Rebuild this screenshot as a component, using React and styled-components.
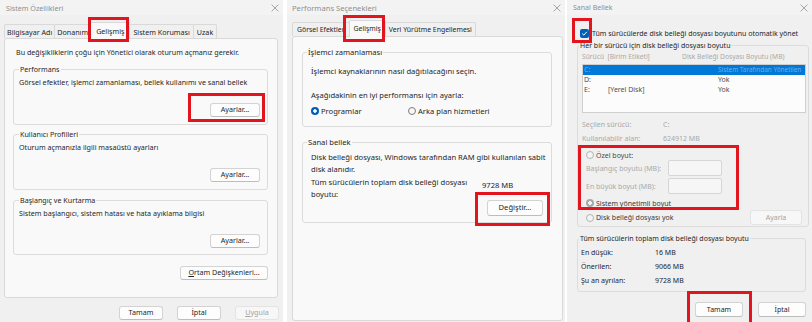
import React from "react";
import styled, { createGlobalStyle, css } from "styled-components";

const GlobalStyle = createGlobalStyle`
  html, body { margin: 0; padding: 0; background: #ffffff; }
  body { font-family: "Noto Sans", "Open Sans", "DejaVu Sans", sans-serif; color: #1f1f1f; }
  *, *::before, *::after { box-sizing: border-box; }
`;

const Screen = styled.div`
  display: flex;
  align-items: stretch;
  width: 812px;
  height: 322px;
  overflow: hidden;
  background: #ffffff;
`;

const Window = styled.section`
  position: relative;
  flex: 0 0 ${(p) => p.$w}px;
  margin-left: ${(p) => p.$ml || 0}px;
  display: flex;
  flex-direction: column;
  background: #f0f0f0;
  font-size: ${(p) => p.$fs}px;
  color: ${(p) => p.$color || "#1f1f1f"};
  overflow: hidden;
`;

const TitleBar = styled.header`
  flex: 0 0 15px;
  display: flex;
  align-items: center;
  justify-content: space-between;
  padding: 0 4px 0 ${(p) => p.$pl}px;
  background: #f3f3f3;
`;

const TitleText = styled.span`
  color: #8f8f8f;
  line-height: 10px;
  white-space: nowrap;
`;

const CloseSvg = styled.svg`
  display: block;
  flex: 0 0 auto;
`;

const CloseIcon = () => (
  <CloseSvg width="8" height="8" viewBox="0 0 8 8">
    <path d="M0.6 0.6 L7.4 7.4 M7.4 0.6 L0.6 7.4" stroke="#8f8f8f" strokeWidth="0.8" fill="none" />
  </CloseSvg>
);

const TabStrip = styled.div`
  flex: 0 0 ${(p) => p.$h}px;
  display: flex;
  align-items: flex-end;
  padding-left: ${(p) => p.$pl}px;
  font-size: ${(p) => (p.$fs ? `${p.$fs}px` : "inherit")};
`;

const Tab = styled.div`
  position: relative;
  z-index: ${(p) => (p.$active ? 2 : 1)};
  display: flex;
  align-items: center;
  height: ${(p) => (p.$active ? p.$h + 3 : p.$h)}px;
  margin-right: -1px;
  margin-bottom: ${(p) => (p.$active ? -1 : 0)}px;
  padding: ${(p) => (p.$active ? "0 " : "1px ")}${(p) => p.$px}px 0;
  background: ${(p) => (p.$active ? "#f9f9f9" : "#f0f0f0")};
  border: 1px solid #d9d9d9;
  border-bottom: none;
  border-radius: 2px 2px 0 0;
  line-height: 10px;
  white-space: nowrap;
`;

const TabPanel = styled.div`
  flex: ${(p) => (p.$h ? `0 0 ${p.$h}px` : "1 1 auto")};
  margin: ${(p) => p.$m};
  padding: ${(p) => p.$pad};
  background: #f9f9f9;
  border: 1px solid #d9d9d9;
  border-radius: 3px;
  display: flex;
  flex-direction: column;
`;

const Body = styled.div`
  flex: 1 1 auto;
  display: flex;
  flex-direction: column;
  padding: ${(p) => p.$pad};
`;

const Group = styled.fieldset`
  margin: ${(p) => p.$mt || 0}px ${(p) => p.$mr || 0}px 0 0;
  padding: 0 ${(p) => p.$pr}px ${(p) => p.$pb}px ${(p) => p.$pl}px;
  border: 1px solid #dcdcdc;
  border-radius: 3px;
  min-width: 0;
  display: flex;
  flex-direction: column;
`;

const Legend = styled.legend`
  padding: 0 1px;
  margin-left: ${(p) => p.$ml || 0}px;
  line-height: 11px;
  white-space: nowrap;
  color: ${(p) => p.$color || "inherit"};
`;

const Text = styled.p`
  margin: ${(p) => p.$mt || 0}px 0 0 ${(p) => p.$ml || 0}px;
  line-height: ${(p) => p.$lh || 11}px;
  color: ${(p) => p.$color || "inherit"};
  white-space: nowrap;
`;

const Btn = styled.button`
  flex: 0 0 auto;
  width: ${(p) => p.$w}px;
  height: ${(p) => p.$h || 14}px;
  margin-right: ${(p) => p.$mr || 0}px;
  padding: 0;
  font: inherit;
  line-height: 1;
  color: ${(p) => (p.disabled || p.$dim ? "#a3a3a3" : "#1f1f1f")};
  background: ${(p) => (p.disabled || p.$dim ? "#f7f7f7" : "#fdfdfd")};
  border: 1px solid ${(p) => (p.disabled || p.$dim ? "#e3e3e3" : "#d3d3d3")};
  border-bottom-color: ${(p) => (p.disabled || p.$dim ? "#e3e3e3" : "#bdbdbd")};
  border-radius: 3px;
  display: flex;
  align-items: center;
  justify-content: center;
  u { text-decoration-thickness: 0.6px; text-underline-offset: 1px; }
`;

const ButtonRow = styled.div`
  display: flex;
  justify-content: flex-end;
  align-items: center;
  gap: ${(p) => p.$gap || 0}px;
  margin-top: ${(p) => p.$mt || 0}px;
  padding-right: ${(p) => p.$pr || 0}px;
`;

const Footer = styled.footer`
  flex: 1 1 auto;
  display: flex;
  justify-content: flex-end;
  align-items: flex-start;
  gap: 14px;
  padding: 8px 4px 0 0;
`;

const Highlight = styled.div`
  position: absolute;
  left: ${(p) => p.$x}px;
  top: ${(p) => p.$y}px;
  width: ${(p) => p.$w}px;
  height: ${(p) => p.$h}px;
  border: 3px solid #e2141d;
  pointer-events: none;
  z-index: 10;
`;

const radioLook = {
  on: css`
    background: radial-gradient(circle, #ffffff 0 1.5px, #005fb8 1.9px);
  `,
  off: css`
    border: 1px solid #7d7d7d;
    background: #f7f7f7;
  `,
  offDim: css`
    border: 1px solid #b4b4b4;
    background: #f4f4f4;
  `,
  onDim: css`
    background: radial-gradient(circle, #f2f2f2 0 1.6px, #a9a9a9 2px);
  `,
};

const RadioDot = styled.span`
  flex: 0 0 auto;
  width: 8px;
  height: 8px;
  border-radius: 50%;
  ${(p) => radioLook[p.$look]}
`;

const RadioOption = styled.label`
  display: flex;
  align-items: center;
  gap: ${(p) => p.$gap || 2}px;
  width: ${(p) => (p.$w ? `${p.$w}px` : "auto")};
  height: ${(p) => p.$h || 12}px;
  color: ${(p) => p.$color || "inherit"};
  white-space: nowrap;
`;

const RadioRow = styled.div`
  display: flex;
  align-items: center;
  margin-top: ${(p) => p.$mt || 0}px;
`;

const CheckRow = styled.label`
  display: flex;
  align-items: center;
  gap: 3px;
  height: 12px;
  margin: 12px 0 0 3px;
  white-space: nowrap;
`;

const CheckBox = styled.span`
  flex: 0 0 auto;
  width: 9px;
  height: 9px;
  border-radius: 2px;
  background: #005fb8;
  display: flex;
  align-items: center;
  justify-content: center;
`;

const TotalRow = styled.div`
  display: flex;
  align-items: flex-start;
  margin-top: ${(p) => p.$mt || 0}px;
`;

const TotalLabel = styled.p`
  margin: 0;
  width: 171px;
  line-height: 12px;
`;

const TotalValue = styled.span`
  margin-top: 3px;
  line-height: 12px;
  white-space: nowrap;
`;

const HeaderRow = styled.div`
  display: grid;
  grid-template-columns: 100px 1fr;
  line-height: 10px;
  margin-top: 1.5px;
  font-size: 6.7px;
  color: #a9a9a9;
  white-space: nowrap;
`;

const ListBox = styled.div`
  height: 49px;
  margin: 2px 2px 0 0;
  border: 1px solid #cfcfcf;
  background: #fcfcfc;
  overflow: hidden;
`;

const ListRow = styled.div`
  display: grid;
  grid-template-columns: 24px 110px 1fr;
  height: 10px;
  line-height: 10px;
  padding-left: 1px;
  background: ${(p) => (p.$sel ? "#0078d7" : "transparent")};
  color: ${(p) => (p.$sel ? "#78abe0" : "#505050")};
  white-space: nowrap;
  overflow: hidden;
`;

const SizeCell = styled.span`
  font-size: ${(p) => (p.$small ? "6.4px" : "inherit")};
`;

const InfoRow = styled.div`
  display: grid;
  grid-template-columns: ${(p) => p.$col}px 1fr;
  line-height: 10px;
  margin-top: ${(p) => p.$mt || 0}px;
  margin-left: ${(p) => p.$ml || 0}px;
  color: ${(p) => p.$color || "inherit"};
  white-space: nowrap;
`;

const SizeRow = styled.div`
  display: flex;
  align-items: center;
  height: 16px;
  margin: ${(p) => p.$mt || 0}px 0 0 4px;
  color: #aaaaaa;
  white-space: nowrap;
`;

const SizeLabel = styled.span`
  flex: 0 0 82px;
`;

const SizeInput = styled.span`
  flex: 0 0 54px;
  height: ${(p) => p.$h || 16}px;
  border: 1px solid #d6d6d6;
  border-radius: 2px;
  background: #f6f6f6;
`;

const SplitRow = styled.div`
  display: flex;
  align-items: center;
  justify-content: space-between;
  height: 15px;
  margin: ${(p) => p.$mt || 0}px 0 0 4px;
`;

const Indent = styled.div`
  display: flex;
  flex-direction: column;
  margin-left: ${(p) => p.$ml}px;
`;

function SystemProperties() {
  return (
    <Window $w={283} $fs={7.15} $color="#262626">
      <TitleBar $pl={6}>
        <TitleText>Sistem Özellikleri</TitleText>
        <CloseIcon />
      </TitleBar>
      <TabStrip $h={23} $pl={4}>
        <Tab $h={14} $px={2}>Bilgisayar Adı</Tab>
        <Tab $h={14} $px={2}>Donanım</Tab>
        <Tab $h={14} $px={5} $active>Gelişmiş</Tab>
        <Tab $h={14} $px={3}>Sistem Koruması</Tab>
        <Tab $h={14} $px={3}>Uzak</Tab>
      </TabStrip>
      <TabPanel $h={260} $m="0 5px 0 4px" $pad="8px 9px 0 8px">
        <Text $ml={3}>Bu değişikliklerin çoğu için Yönetici olarak oturum açmanız gerekir.</Text>
        <Group $mt={6} $pl={5} $pr={7} $pb={7}>
          <Legend>Performans</Legend>
          <Text $mt={2}>Görsel efektler, işlemci zamanlaması, bellek kullanımı ve sanal bellek</Text>
          <ButtonRow $mt={15}>
            <Btn $w={50}>Ayarlar...</Btn>
          </ButtonRow>
        </Group>
        <Group $mt={4} $pl={5} $pr={7} $pb={7}>
          <Legend>Kullanıcı Profilleri</Legend>
          <Text $mt={2}>Oturum açmanızla ilgili masaüstü ayarları</Text>
          <ButtonRow $mt={15}>
            <Btn $w={50}>Ayarlar...</Btn>
          </ButtonRow>
        </Group>
        <Group $mt={5} $pl={5} $pr={7} $pb={6}>
          <Legend>Başlangıç ve Kurtarma</Legend>
          <Text $mt={2}>Sistem başlangıcı, sistem hatası ve hata ayıklama bilgisi</Text>
          <ButtonRow $mt={15}>
            <Btn $w={50}>Ayarlar...</Btn>
          </ButtonRow>
        </Group>
        <ButtonRow $mt={11}>
          <Btn $w={88}>
            <span><u>O</u>rtam Değişkenleri...</span>
          </Btn>
        </ButtonRow>
      </TabPanel>
      <Footer>
        <Btn $w={44}>Tamam</Btn>
        <Btn $w={44}>İptal</Btn>
        <Btn $w={44} disabled>
          <span><u>U</u>ygula</span>
        </Btn>
      </Footer>
      <Highlight $x={88} $y={17} $w={41} $h={25} />
      <Highlight $x={188} $y={93} $w={77} $h={29} />
    </Window>
  );
}

function PerformanceOptions() {
  return (
    <Window $w={278} $ml={4} $fs={7.6}>
      <TitleBar $pl={5}>
        <TitleText>Performans Seçenekleri</TitleText>
        <CloseIcon />
      </TitleBar>
      <TabStrip $h={21} $pl={5} $fs={6.9}>
        <Tab $h={14} $px={4}>Görsel Efektler</Tab>
        <Tab $h={14} $px={4} $active>Gelişmiş</Tab>
        <Tab $h={14} $px={3}>Veri Yürütme Engellemesi</Tab>
      </TabStrip>
      <TabPanel $m="0 2px 1px 5px" $pad="9.5px 10px 0 9px">
        <Group $pl={8} $pr={8} $pb={9}>
          <Legend $ml={-4}>İşlemci zamanlaması</Legend>
          <Text $lh={12} $mt={7.5}>İşlemci kaynaklarının nasıl dağıtılacağını seçin.</Text>
          <Text $lh={12} $mt={12}>Aşağıdakinin en iyi performansı için ayarla:</Text>
          <RadioRow $mt={4}>
            <RadioOption $w={97}>
              <RadioDot $look="on" />
              Programlar
            </RadioOption>
            <RadioOption>
              <RadioDot $look="off" />
              Arka plan hizmetleri
            </RadioOption>
          </RadioRow>
        </Group>
        <Group $mt={9.5} $pl={8} $pr={8} $pb={6}>
          <Legend $ml={-4}>Sanal bellek</Legend>
          <Text $lh={12} $mt={3.5}>
            Disk belleği dosyası, Windows tarafından RAM gibi kullanılan sabit
          </Text>
          <Text $lh={12}>disk alanıdır.</Text>
          <TotalRow $mt={1}>
            <TotalLabel>
              Tüm sürücülerin toplam disk belleği dosyası
              <br />
              boyutu:
            </TotalLabel>
            <TotalValue>9728 MB</TotalValue>
          </TotalRow>
          <ButtonRow>
            <Btn $w={56} $h={16}>Değiştir...</Btn>
          </ButtonRow>
        </Group>
      </TabPanel>
      <Highlight $x={56} $y={15} $w={42} $h={27} />
      <Highlight $x={188} $y={192} $w={75} $h={34} />
    </Window>
  );
}

function VirtualMemory() {
  return (
    <Window $w={245} $ml={2} $fs={7.0}>
      <TitleBar $pl={6}>
        <TitleText>Sanal Bellek</TitleText>
        <CloseIcon />
      </TitleBar>
      <Body $pad="0 3px 0 10px">
        <CheckRow>
          <CheckBox>
            <svg width="7" height="7" viewBox="0 0 7 7">
              <path d="M1.2 3.6 L2.8 5.1 L5.9 1.8" stroke="#ffffff" strokeWidth="1" fill="none" />
            </svg>
          </CheckBox>
          Tüm sürücülerde disk belleği dosyası boyutunu otomatik yönet
        </CheckRow>
        <Group $mt={0.5} $pl={4} $pr={0} $pb={1}>
          <Legend $ml={-3}>Her bir sürücü için disk belleği dosyası boyutu</Legend>
          <HeaderRow>
            <span>Sürücü&nbsp;&nbsp;[Birim Etiketi]</span>
            <span>Disk Belleği Dosyası Boyutu (MB)</span>
          </HeaderRow>
          <ListBox>
            <ListRow $sel>
              <span>C:</span>
              <span></span>
              <SizeCell $small>Sistem Tarafından Yönetilen</SizeCell>
            </ListRow>
            <ListRow>
              <span>D:</span>
              <span></span>
              <SizeCell>Yok</SizeCell>
            </ListRow>
            <ListRow>
              <span>E:</span>
              <span>[Yerel Disk]</span>
              <SizeCell>Yok</SizeCell>
            </ListRow>
          </ListBox>
          <InfoRow $col={81} $mt={7} $color="#a9a9a9">
            <span>Seçilen sürücü:</span>
            <span>C:</span>
          </InfoRow>
          <InfoRow $col={81} $mt={4} $color="#a9a9a9">
            <span>Kullanılabilir alan:</span>
            <span>624912 MB</span>
          </InfoRow>
          <Indent $ml={4}>
            <RadioRow $mt={6}>
              <RadioOption $h={10} $gap={2} $color="#4a4a4a">
                <RadioDot $look="offDim" />
                Özel boyut:
              </RadioOption>
            </RadioRow>
          </Indent>
          <SizeRow>
            <SizeLabel>Başlangıç boyutu (MB):</SizeLabel>
            <SizeInput $h={16} />
          </SizeRow>
          <SizeRow $mt={2}>
            <SizeLabel>En büyük boyut (MB):</SizeLabel>
            <SizeInput $h={16} />
          </SizeRow>
          <Indent $ml={4}>
            <RadioRow $mt={4}>
              <RadioOption $h={10} $gap={2} $color="#3a3a3a">
                <RadioDot $look="onDim" />
                Sistem yönetimli boyut
              </RadioOption>
            </RadioRow>
          </Indent>
          <SplitRow $mt={2}>
            <RadioOption $h={15} $gap={2} $color="#3a3a3a">
              <RadioDot $look="offDim" />
              Disk belleği dosyası yok
            </RadioOption>
            <Btn $w={52} $h={15} $mr={6} $dim>
              Ayarla
            </Btn>
          </SplitRow>
        </Group>
        <Group $mt={5.5} $mr={3} $pl={3} $pr={4} $pb={5}>
          <Legend $ml={-2}>Tüm sürücülerin toplam disk belleği dosyası boyutu</Legend>
          <InfoRow $col={74} $mt={4.5}>
            <span>En düşük:</span>
            <span>16 MB</span>
          </InfoRow>
          <InfoRow $col={74} $mt={4}>
            <span>Önerilen:</span>
            <span>9066 MB</span>
          </InfoRow>
          <InfoRow $col={74} $mt={4}>
            <span>Şu an ayrılan:</span>
            <span>9728 MB</span>
          </InfoRow>
        </Group>
        <ButtonRow $mt={10} $gap={15} $pr={3}>
          <Btn $w={48} $h={15}>Tamam</Btn>
          <Btn $w={48} $h={15}>İptal</Btn>
        </ButtonRow>
      </Body>
      <Highlight $x={5} $y={18} $w={20} $h={25} />
      <Highlight $x={11} $y={145} $w={161} $h={65} />
      <Highlight $x={120} $y={291} $w={65} $h={36} />
    </Window>
  );
}

export default function App() {
  return (
    <>
      <GlobalStyle />
      <Screen>
        <SystemProperties />
        <PerformanceOptions />
        <VirtualMemory />
      </Screen>
    </>
  );
}
